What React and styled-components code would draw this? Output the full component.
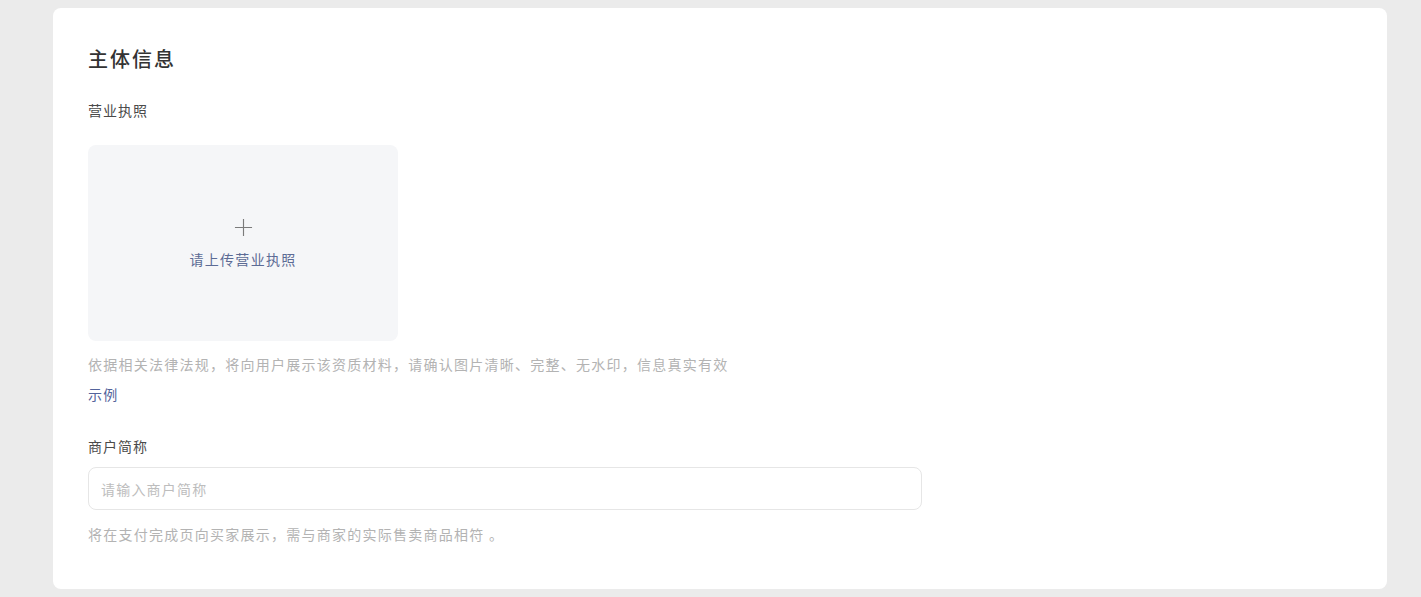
import styled, { createGlobalStyle } from "styled-components";

const GlobalStyle = createGlobalStyle`
  html, body {
    margin: 0;
    padding: 0;
    background: #ebebeb;
    font-family: "Noto Sans CJK SC", "Noto Sans", sans-serif;
  }
`;

const App = () => {
  return (
    <>
      <GlobalStyle />
      <Page>
        <Card>
          <Title>主体信息</Title>
          <Label>营业执照</Label>
          <UploadBox>
            <PlusIcon viewBox="0 0 20 20">
              <path d="M10 1v18M1 10h18" stroke="#7b7b7b" strokeWidth="1.2" />
            </PlusIcon>
            <UploadText>请上传营业执照</UploadText>
          </UploadBox>
          <Help $top={13}>
            依据相关法律法规，将向用户展示该资质材料，请确认图片清晰、完整、无水印，信息真实有效
          </Help>
          <Link>示例</Link>
          <Label $top={32}>商户简称</Label>
          <Input placeholder="请输入商户简称" />
          <Help $top={14}>将在支付完成页向买家展示，需与商家的实际售卖商品相符 。</Help>
        </Card>
      </Page>
    </>
  );
};

export default App;

const Page = styled.div`
  padding: 8px 34px 9px 53px;
`;

const Card = styled.div`
  background: #fff;
  border-radius: 8px;
  padding: 37px 35px 45px;
  display: flex;
  flex-direction: column;
  align-items: flex-start;
`;

const Title = styled.h2`
  margin: 0;
  font-size: 20px;
  line-height: 28px;
  font-weight: 500;
  letter-spacing: 2px;
  color: #333;
`;

const Label = styled.div`
  margin-top: ${(p) => p.$top || 27}px;
  font-size: 14px;
  line-height: 20px;
  letter-spacing: 1px;
  color: #4a4a4a;
`;

const UploadBox = styled.div`
  margin-top: 25px;
  width: 310px;
  height: 196px;
  background: #f5f6f8;
  border-radius: 8px;
  display: flex;
  flex-direction: column;
  align-items: center;
  justify-content: center;
  gap: 12px;
`;

const PlusIcon = styled.svg`
  width: 19px;
  height: 19px;
`;

const UploadText = styled.div`
  font-size: 14px;
  line-height: 20px;
  letter-spacing: 1.3px;
  color: #5c6b95;
`;

const Help = styled.div`
  margin-top: ${(p) => p.$top}px;
  font-size: 14px;
  line-height: 20px;
  letter-spacing: 1.25px;
  color: #b3b3b3;
`;

const Link = styled.a`
  margin-top: 10px;
  font-size: 14px;
  line-height: 20px;
  letter-spacing: 1.2px;
  color: #53639b;
  cursor: pointer;
`;

const Input = styled.input`
  margin-top: 11px;
  box-sizing: border-box;
  width: 834px;
  height: 43px;
  padding: 0 12px;
  border: 1px solid #e6e6e6;
  border-radius: 8px;
  font: inherit;
  font-size: 14px;
  letter-spacing: 1.2px;
  color: #333;
  outline: none;

  &::placeholder {
    color: #bdbdbd;
  }
`;
